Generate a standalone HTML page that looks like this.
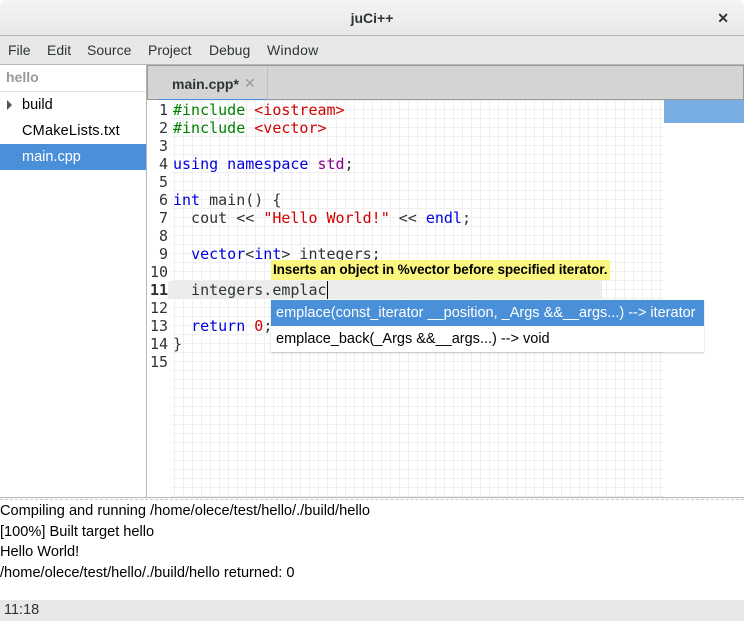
<!DOCTYPE html>
<html><head><style>
*{margin:0;padding:0;box-sizing:border-box}
body{width:744px;height:621px;overflow:hidden;background:#fff;font-family:"Liberation Sans",sans-serif;font-size:14px;color:#2e3436;position:relative}
.abs{position:absolute}
#title{left:0;top:0;width:744px;height:36px;background:linear-gradient(#f4f4f4,#e8e8e8);border-bottom:1px solid #b6b6b3;border-radius:6px 6px 0 0;text-align:center;line-height:36px;font-weight:bold;color:#2e3436}
#menu{left:0;top:36px;width:744px;height:29px;background:#e8e8e7;border-bottom:1px solid #b6b6b3}
#menu span{position:absolute;top:6px}
#side{left:0;top:65px;width:147px;height:433px;border-right:1px solid #b6b6b3;background:#fff}
.mono{font-family:"DejaVu Sans Mono","Liberation Mono",monospace;font-size:15px;white-space:pre}
#tabs{left:147px;top:65px;width:597px;height:35px;background:#d4d4d4;border:1px solid #999;border-right:1px solid #999}
#editor{left:147px;top:100px;width:517px;height:397px;background-color:#fff;background-image:linear-gradient(#efefef 1px,transparent 1px),linear-gradient(90deg,#efefef 1px,transparent 1px);background-size:9px 9px}
#gutter{left:147px;top:100px;width:24px;height:397px;background:#fff}
.ln{position:absolute;left:147px;width:21px;text-align:right;color:#2e3436}
.cl{position:absolute;left:173px}
.g{color:#008000}.r{color:#d00000}.b{color:#0000e0}.p{color:#8b008b}
</style></head><body>
<div id="title" class="abs">juCi++<span style="position:absolute;right:15px;top:0;font-size:14px">✕</span></div>
<div id="menu" class="abs"><span style="left:8px">File</span><span style="left:47px">Edit</span><span style="left:87px">Source</span><span style="left:148px">Project</span><span style="left:209px">Debug</span><span style="left:267px;letter-spacing:0.3px">Window</span></div>
<div id="side" class="abs">
<div class="abs" style="left:6px;top:4px;color:#999;font-weight:bold">hello</div>
<div class="abs" style="left:0;top:26px;width:146px;border-top:1px solid #e4e4e4"></div>
<div class="abs" style="left:7px;top:35px;width:0;height:0;border-left:5px solid #555;border-top:5px solid transparent;border-bottom:5px solid transparent"></div>
<div class="abs" style="left:22px;top:32px;color:#000;font-size:14.5px">build</div>
<div class="abs" style="left:22px;top:58px;color:#000;font-size:14.5px;letter-spacing:0.2px">CMakeLists.txt</div>
<div class="abs" style="left:0;top:79px;width:146px;height:26px;background:#4a90d9"></div>
<div class="abs" style="left:22px;top:84px;color:#fff;font-size:14.5px">main.cpp</div>
</div>
<div id="tabs" class="abs"><div class="abs" style="left:10px;top:0;width:110px;height:35px;background:#d4d4d4;border-right:1px solid #c0c0c0;border-bottom:2px solid #4a90d9"></div><div class="abs" style="left:24px;top:10px;font-weight:bold;color:#2e3436">main.cpp*</div><div class="abs" style="left:96px;top:9px;color:#999">✕</div></div>
<div id="editor" class="abs"></div>
<div id="gutter" class="abs"></div>
<div class="abs" style="left:664px;top:100px;width:80px;height:23px;background:#79aee5"></div>
<div class="abs" style="left:168px;top:281px;width:434px;height:18px;background:#ececec"></div>
<div class="mono">
<div class="ln" style="top:101px">1</div><div class="cl" style="top:101px"><span class="g">#include </span><span class="r">&lt;iostream&gt;</span></div>
<div class="ln" style="top:119px">2</div><div class="cl" style="top:119px"><span class="g">#include </span><span class="r">&lt;vector&gt;</span></div>
<div class="ln" style="top:137px">3</div>
<div class="ln" style="top:155px">4</div><div class="cl" style="top:155px"><span class="b">using namespace </span><span class="p">std</span>;</div>
<div class="ln" style="top:173px">5</div>
<div class="ln" style="top:191px">6</div><div class="cl" style="top:191px"><span class="b">int</span> main() {</div>
<div class="ln" style="top:209px">7</div><div class="cl" style="top:209px">  cout &lt;&lt; <span class="r">"Hello World!"</span> &lt;&lt; <span class="b">endl</span>;</div>
<div class="ln" style="top:227px">8</div>
<div class="ln" style="top:245px">9</div><div class="cl" style="top:245px">  <span class="b">vector</span>&lt;<span class="b">int</span>&gt; integers;</div>
<div class="ln" style="top:263px">10</div>
<div class="ln" style="top:281px;font-weight:bold">11</div><div class="cl" style="top:281px">  integers.emplac<span style="border-left:1px solid #000"></span></div>
<div class="ln" style="top:299px">12</div>
<div class="ln" style="top:317px">13</div><div class="cl" style="top:317px">  <span class="b">return</span> <span class="r">0</span>;</div>
<div class="ln" style="top:335px">14</div><div class="cl" style="top:335px">}</div>
<div class="ln" style="top:353px">15</div>
</div>
<div class="abs" style="left:271px;top:260px;width:339px;height:20px;background:#fbf77e;color:#000;font-size:13.5px;font-weight:bold;line-height:20px;padding-left:2px;letter-spacing:-0.1px">Inserts an object in %vector before specified iterator.</div>
<div class="abs" style="left:271px;top:300px;width:433px;height:52px;background:#fff;box-shadow:0 1px 2px rgba(0,0,0,.2);font-size:14.5px;color:#000;white-space:nowrap;overflow:hidden">
<div style="height:26px;background:#4a90d9;color:#fff;line-height:26px;padding-left:5px">emplace(const_iterator __position, _Args &amp;&amp;__args...) --&gt; iterator</div>
<div style="height:26px;line-height:26px;padding-left:5px">emplace_back(_Args &amp;&amp;__args...) --&gt; void</div>
</div>
<div class="abs" style="left:0;top:497px;width:744px;border-top:1px solid #b6b6b3"></div>
<div class="abs" style="left:0;top:499px;width:744px;border-top:1px dashed #c8c8c8"></div>
<div class="abs" style="left:0;top:501px;font-size:14.6px;line-height:20.5px;color:#000">Compiling and running /home/olece/test/hello/./build/hello<br>[100%] Built target hello<br>Hello World!<br>/home/olece/test/hello/./build/hello returned: 0</div>
<div class="abs" style="left:0;top:600px;width:744px;height:21px;background:#e8e8e7;padding-left:4px;line-height:21px;color:#2e3436;font-size:14.5px">11:18</div>
</body></html>
